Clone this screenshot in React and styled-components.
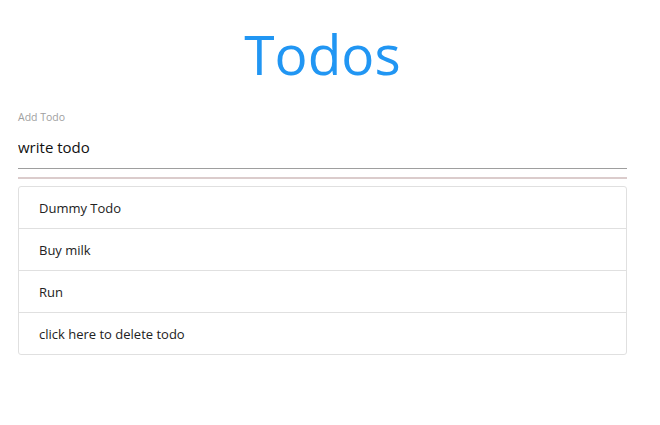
import { useState } from "react";
import styled, { createGlobalStyle } from "styled-components";

const GlobalStyle = createGlobalStyle`
  body {
    margin: 0;
    background: #ffffff;
    font-family: "Open Sans", "Noto Sans", sans-serif;
  }
`;

const Page = styled.div`
  width: 609px;
  margin-left: 18px;
  padding-top: 14px;
`;

const Title = styled.h1`
  margin: 0;
  text-align: center;
  color: #2196f3;
  font-size: 55px;
  font-weight: 400;
  line-height: 80px;
`;

const Field = styled.div`
  margin-top: 16px;
  display: flex;
  flex-direction: column;
`;

const Label = styled.label`
  font-size: 10.5px;
  color: #a0a0a0;
  line-height: 14px;
`;

const Input = styled.input`
  box-sizing: content-box;
  border: none;
  border-bottom: 1px solid #9e9e9e;
  outline: none;
  padding: 0 0 6px;
  margin-top: 8px;
  height: 30px;
  font-family: inherit;
  font-size: 15px;
  color: #111;
  background: transparent;
`;

const Divider = styled.div`
  height: 2px;
  margin-top: 8px;
  background: #dbcccc;
`;

const List = styled.ul`
  list-style: none;
  margin: 7px 0 0;
  padding: 0;
  border: 1px solid #e0e0e0;
  border-radius: 3px;
`;

const Item = styled.li`
  height: 41px;
  display: flex;
  align-items: center;
  padding-left: 20px;
  font-size: 13px;
  color: #222;
  cursor: pointer;
  & + & {
    border-top: 1px solid #e0e0e0;
  }
`;

export default function App() {
  const [value, setValue] = useState("write todo");
  const [todos, setTodos] = useState([
    "Dummy Todo",
    "Buy milk",
    "Run",
    "click here to delete todo",
  ]);

  const add = (e) => {
    if (e.key === "Enter" && value.trim()) {
      setTodos([...todos, value]);
      setValue("");
    }
  };

  return (
    <>
      <GlobalStyle />
      <Page>
        <Title>Todos</Title>
        <Field>
          <Label>Add Todo</Label>
          <Input
            value={value}
            onChange={(e) => setValue(e.target.value)}
            onKeyDown={add}
          />
        </Field>
        <Divider />
        <List>
          {todos.map((t, i) => (
            <Item key={i} onClick={() => setTodos(todos.filter((_, j) => j !== i))}>
              {t}
            </Item>
          ))}
        </List>
      </Page>
    </>
  );
}
